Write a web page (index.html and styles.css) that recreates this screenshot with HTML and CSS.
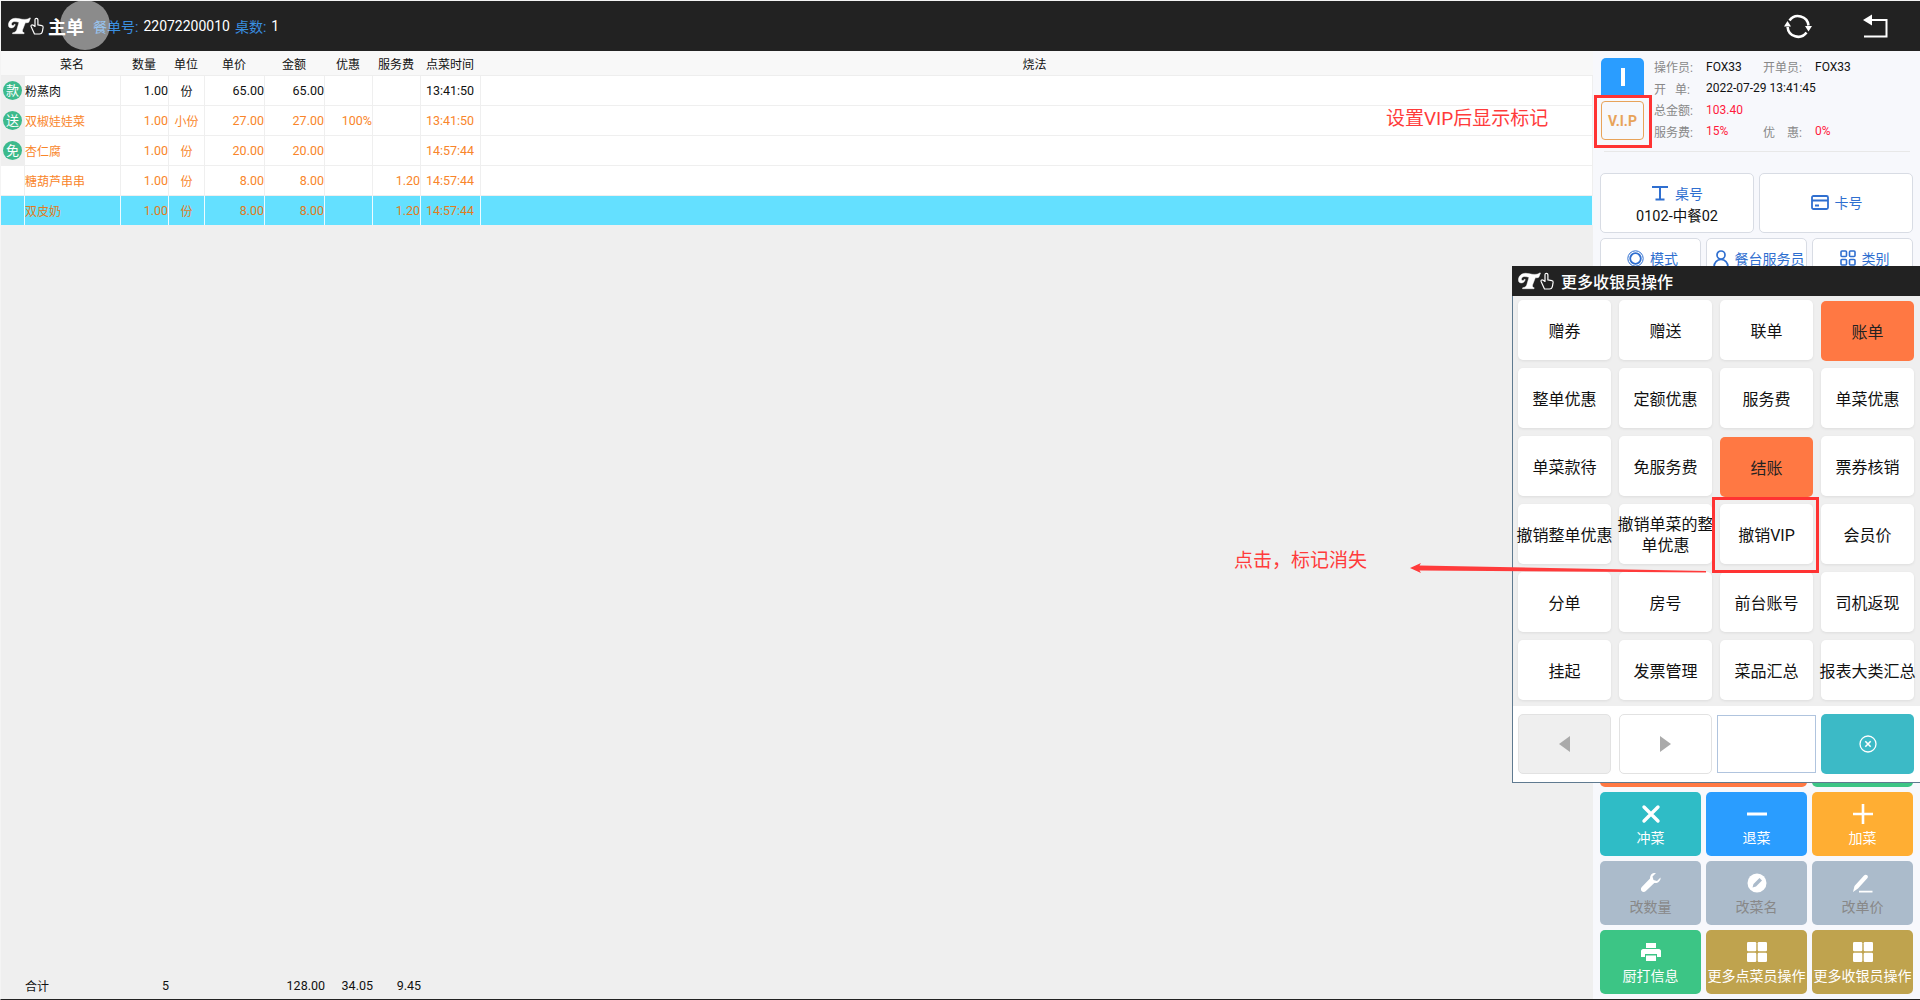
FILE: index.html
```html
<!DOCTYPE html>
<html lang="zh">
<head>
  <meta charset="utf-8">
  <title>主单</title>
  <link rel="stylesheet" href="styles.css">
</head>
<body>
  <svg class="defs" width="0" height="0">
    <symbol id="logo" viewBox="0 0 36 18">
      <path fill="#fff" stroke="#fff" stroke-width=".5" d="M.5 8.500C.1 4.500 3.300 1.300 7.500 1.300c3 0 6 1.300 9.500 1.100 2 0 3.700-.6 5-1.600l.5.3-1.700 4.100c-1 .5-2.200.7-3.500.6L14.500 13c-.4 1.500.2 2.300 1.700 2.800l-.2.9H4.500l.2-.9c2.200-.3 3.500-1.300 4.100-3L11 5.300c-1.500-.4-3-.8-4.300-.8-1.900 0-3.200 1-3.300 2.500-.1 1.100.8 1.800 1.900 1.400.6-.2 1-.6 1.100-1.100l.8.2c-.3 2-1.800 3.400-3.800 3.400C1.400 10.900.6 9.900.5 8.500z"/>
      <path fill="none" stroke="#fff" stroke-width="1.200" stroke-linejoin="round" d="M26.500 17h5c1.700 0 2.700-1.200 3-3l.6-3.600c.1-1-.3-1.700-1.200-1.800l-4-.7V3c0-2.300-2.900-2.300-2.900 0v6.500l-1.700-1.300c-1.600-1.100-3 .4-2 1.800l3.200 7z"/>
    </symbol>
    <symbol id="tiles" viewBox="0 0 20 20">
      <rect x="0" y="0" width="9.300" height="9.300" rx="1.200"/>
      <rect x="10.700" y="0" width="9.300" height="9.300" rx="1.200"/>
      <rect x="0" y="10.700" width="9.300" height="9.300" rx="1.200"/>
      <rect x="10.700" y="10.700" width="9.300" height="9.300" rx="1.200"/>
    </symbol>
  </svg>

  <div class="app">
    <header class="topbar">
      <div class="brand">
        <svg class="logo" width="36" height="18"><use href="#logo"/></svg>
        <span class="brand-name">主单</span>
        <span class="label-blue order-no">餐单号:</span>
        <span>22072200010</span>
        <span class="label-blue table-count">桌数:</span>
        <span>1</span>
      </div>
      <div class="top-actions">
        <svg width="28" height="28" viewBox="0 0 28 28" fill="none" stroke="#fff" stroke-width="2.600">
          <path d="M5.500 8.500A10.500 10.500 0 0 1 24.500 13.500"/>
          <path d="M22.500 20.500A10.500 10.500 0 0 1 3.600 15"/>
          <path fill="#fff" stroke="none" d="M0 14.500 3.500 9l3.500 5.500zM21 14l3.500 5.500L28 14z"/>
        </svg>
        <svg width="26" height="24" viewBox="0 0 26 24" fill="none" stroke="#fff" stroke-width="2">
          <path d="M8 6h16.500v16.500H2"/>
          <path fill="#fff" stroke="none" d="M1 6l9-5.500v11z"/>
        </svg>
      </div>
    </header>

    <div class="content">
      <main class="order">
        <div class="row head">
          <div></div>
          <div class="mid">菜名</div>
          <div class="mid">数量</div>
          <div class="mid">单位</div>
          <div class="mid">单价</div>
          <div class="mid">金额</div>
          <div class="mid">优惠</div>
          <div class="mid">服务费</div>
          <div class="mid">点菜时间</div>
          <div class="mid method">烧法</div>
        </div>
        <div class="row item">
          <div class="tag-cell"><span class="tag">款</span></div>
          <div>粉蒸肉</div><div class="num">1.00</div><div class="mid">份</div><div class="num">65.00</div><div class="num">65.00</div><div class="num"></div><div class="num"></div><div class="time">13:41:50</div><div></div>
        </div>
        <div class="row item warm">
          <div class="tag-cell"><span class="tag">送</span></div>
          <div>双椒娃娃菜</div><div class="num">1.00</div><div class="mid">小份</div><div class="num">27.00</div><div class="num">27.00</div><div class="num">100%</div><div class="num"></div><div class="time">13:41:50</div><div></div>
        </div>
        <div class="row item warm">
          <div class="tag-cell"><span class="tag">免</span></div>
          <div>杏仁腐</div><div class="num">1.00</div><div class="mid">份</div><div class="num">20.00</div><div class="num">20.00</div><div class="num"></div><div class="num"></div><div class="time">14:57:44</div><div></div>
        </div>
        <div class="row item warm">
          <div></div>
          <div>糖葫芦串串</div><div class="num">1.00</div><div class="mid">份</div><div class="num">8.00</div><div class="num">8.00</div><div class="num"></div><div class="num">1.20</div><div class="time">14:57:44</div><div></div>
        </div>
        <div class="row item warm selected">
          <div></div>
          <div>双皮奶</div><div class="num">1.00</div><div class="mid">份</div><div class="num">8.00</div><div class="num">8.00</div><div class="num"></div><div class="num">1.20</div><div class="time">14:57:44</div><div></div>
        </div>
        <div class="row totals">
          <div></div>
          <div>合计</div><div class="num">5</div><div></div><div></div><div class="num">128.00</div><div class="num">34.05</div><div class="num">9.45</div><div></div><div></div>
        </div>
      </main>

      <aside class="panel">
        <section class="info">
          <div class="badges">
            <div class="badge-i"><span></span></div>
            <div class="badge-vip">V.I.P</div>
          </div>
          <div class="info-grid">
            <span class="lbl">操作员:</span><span>FOX33</span><span class="lbl">开单员:</span><span>FOX33</span>
            <span class="lbl"><i class="gap-a">开</i>单:</span><span class="wide">2022-07-29 13:41:45</span>
            <span class="lbl">总金额:</span><span class="red wide">103.40</span>
            <span class="lbl">服务费:</span><span class="red">15%</span><span class="lbl"><i class="gap-b">优</i>惠:</span><span class="red">0%</span>
          </div>
        </section>

        <section class="fields">
          <button class="field">
            <span class="field-title">
              <svg width="18" height="16" viewBox="0 0 18 16" fill="none" stroke="currentColor" stroke-width="2"><path d="M1 2h16M9 2v12M4.500 14.500h9"/></svg>
              桌号
            </span>
            <span class="field-value">0102-中餐02</span>
          </button>
          <button class="field field-single">
            <span class="field-title">
              <svg width="18" height="15" viewBox="0 0 18 15" fill="none" stroke="currentColor" stroke-width="1.800"><rect x="1" y="1" width="16" height="13" rx="1.500"/><path d="M1 5.500h16M4 10.500h4"/></svg>
              卡号
            </span>
          </button>
        </section>
        <section class="modes">
          <button class="field mode">
            <svg width="17" height="17" viewBox="0 0 17 17" fill="none" stroke="currentColor"><circle cx="8.500" cy="8.500" r="7.700" stroke-width="1"/><circle cx="8.500" cy="8.500" r="5.300" stroke-width="1.800"/></svg>
            模式
          </button>
          <button class="field mode">
            <svg width="16" height="17" viewBox="0 0 16 17" fill="none" stroke="currentColor" stroke-width="1.700"><circle cx="8" cy="5" r="4"/><path d="M1 17c0-4.500 3-7.500 7-7.500s7 3 7 7.500"/></svg>
            餐台服务员
          </button>
          <button class="field mode">
            <svg width="16" height="16" viewBox="0 0 16 16" fill="none" stroke="currentColor" stroke-width="1.600"><rect x="1" y="1" width="5.500" height="5.500" rx="1"/><rect x="9.500" y="1" width="5.500" height="5.500" rx="1"/><rect x="1" y="9.500" width="5.500" height="5.500" rx="1"/><rect x="9.500" y="9.500" width="5.500" height="5.500" rx="1"/></svg>
            类别
          </button>
        </section>

        <section class="actions">
          <button class="act orange span2"></button>
          <button class="act green"></button>
          <button class="act teal">
            <svg width="20" height="20" viewBox="0 0 20 20" stroke="#fff" stroke-width="3.400" stroke-linecap="round"><path d="M3 3l14 14M17 3L3 17"/></svg>
            冲菜
          </button>
          <button class="act blue">
            <svg width="20" height="20" viewBox="0 0 20 20" stroke="#fff" stroke-width="2.800" stroke-linecap="round"><path d="M-1 10h21"/></svg>
            退菜
          </button>
          <button class="act amber">
            <svg width="20" height="20" viewBox="0 0 20 20" stroke="#fff" stroke-width="2.600" stroke-linecap="round"><path d="M0 10h20M10 0v20"/></svg>
            加菜
          </button>
          <button class="act gray">
            <svg width="20" height="20" viewBox="0 0 20 20" fill="#fff"><path d="M19.500 4.500 16 8l-3.500-1-1-3.500L15 0c-2.700-.6-6.200 1.200-6 5.500L.8 14c-1.200 1.300-1.200 2.800-.2 4s2.800 1.400 4 .2l8.700-8.200c4 .5 6.700-2.700 6.200-5.500z"/></svg>
            改数量
          </button>
          <button class="act gray">
            <svg width="20" height="20" viewBox="0 0 20 20"><circle cx="10" cy="10" r="9.500" fill="#fff"/><path d="M5.500 14.500 6.500 11 12.500 5 15 7.500 9 13.500z" fill="#abbbcb"/></svg>
            改菜名
          </button>
          <button class="act gray">
            <svg width="20" height="20" viewBox="0 0 20 20" fill="#fff"><path d="M0 19 1.500 13 11 2.500c1-1 2.300-1 3.200-.2s1 2 .1 3L5 15.500zM6 17.800h13.500v1.700H6z"/></svg>
            改单价
          </button>
          <button class="act green">
            <svg width="20" height="20" viewBox="0 0 20 20" fill="#fff"><path d="M5 1h10v5H5zM2 7h16c1 0 2 1 2 2v6h-4v-3H4v3H0V9c0-1 1-2 2-2zM5 13.500h10V19H5z"/></svg>
            厨打信息
          </button>
          <button class="act gold">
            <svg width="20" height="20" fill="#fff"><use href="#tiles"/></svg>
            更多点菜员操作
          </button>
          <button class="act gold">
            <svg width="20" height="20" fill="#fff"><use href="#tiles"/></svg>
            更多收银员操作
          </button>
        </section>
      </aside>
    </div>
  </div>

  <div class="popup">
    <div class="popup-head">
      <svg width="36" height="18"><use href="#logo"/></svg>
      <span>更多收银员操作</span>
    </div>
    <div class="popup-grid">
      <button class="op">赠券</button>
      <button class="op">赠送</button>
      <button class="op">联单</button>
      <button class="op hot">账单</button>
      <button class="op">整单优惠</button>
      <button class="op">定额优惠</button>
      <button class="op">服务费</button>
      <button class="op">单菜优惠</button>
      <button class="op">单菜款待</button>
      <button class="op">免服务费</button>
      <button class="op hot">结账</button>
      <button class="op">票券核销</button>
      <button class="op">撤销整单优惠</button>
      <button class="op">撤销单菜的整<br>单优惠</button>
      <button class="op">撤销VIP</button>
      <button class="op">会员价</button>
      <button class="op">分单</button>
      <button class="op">房号</button>
      <button class="op">前台账号</button>
      <button class="op">司机返现</button>
      <button class="op">挂起</button>
      <button class="op">发票管理</button>
      <button class="op">菜品汇总</button>
      <button class="op">报表大类汇总</button>
    </div>
    <div class="popup-foot">
      <button class="pager off"><span class="tri-left"></span></button>
      <button class="pager"><span class="tri-right"></span></button>
      <input class="page-input" type="text">
      <button class="close-btn">
        <svg width="18" height="18" viewBox="0 0 18 18" fill="none" stroke="#fff"><circle cx="9" cy="9" r="8" stroke-width="1.300"/><path d="M6.300 6.300l5.400 5.400M11.700 6.300l-5.400 5.400" stroke-width="1.600"/></svg>
      </button>
    </div>
  </div>

  <!-- overlays from the screenshot's markup -->
  <div class="touch-dot"></div>
  <div class="mark mark-vip"></div>
  <div class="mark mark-cancel"></div>
  <div class="note note-vip">设置VIP后显示标记</div>
  <div class="note note-click">点击&#xFF0C;标记消失</div>
  <svg class="arrow" width="300" height="14" viewBox="0 0 300 14">
    <path fill="#ff3b3b" d="M0 6 11 1 9.500 3.500 296 9V10.500L9.500 8.500 11 11z"/>
  </svg>
</body>
</html>
```

FILE: styles.css
```css
* {
  box-sizing: border-box;
}
body {
  margin: 0;
  width: 1920px;
  height: 1000px;
  overflow: hidden;
  position: relative;
  background-color: #efefef;
  font-family: Roboto, "Noto Sans CJK SC", sans-serif;
  font-size: 12px;
  color: #111;
}
button {
  font-family: inherit;
  padding: 0;
  cursor: pointer;
}
.defs {
  position: absolute;
}

.app {
  height: 1000px;
  display: flex;
  flex-direction: column;
  border-top: 1px solid #f4f4f4;
  border-left: 1px solid #f4f4f4;
  border-bottom: 1px solid #222;
}

/* top bar */
.topbar {
  height: 50px;
  flex: none;
  background-color: #222;
  color: #fff;
  display: flex;
  justify-content: space-between;
  align-items: center;
  padding: 0 32px 0 7px;
}
.brand {
  display: flex;
  align-items: center;
  font-size: 14px;
}
.logo {
  margin-right: 4px;
}
.brand-name {
  font-size: 18px;
  font-weight: 700;
}
.label-blue {
  color: #3a8fe0;
}
.order-no {
  margin: 0 5px 0 9px;
}
.table-count {
  margin: 0 5px 0 5px;
}
.top-actions {
  display: flex;
  align-items: center;
  gap: 50px;
}

/* order table */
.content {
  flex: 1;
  display: flex;
  min-height: 0;
}
.order {
  width: 1592px;
  display: flex;
  flex-direction: column;
}
.row {
  display: grid;
  grid-template-columns: 24px 96px 48px 36px 60px 60px 48px 48px 60px 1fr;
  align-items: stretch;
}
.row > div {
  display: flex;
  align-items: center;
  white-space: nowrap;
}
.mid {
  justify-content: center;
}
.num {
  justify-content: flex-end;
  font-size: 12.5px;
}
.time {
  justify-content: center;
  font-size: 12.5px;
  padding-right: 1px;
}
.head {
  height: 25px;
  background-color: #f8f8f8;
  border-bottom: 1px solid #eee;
}
.head .mid {
  padding-right: 2px;
}
.head .method {
  padding-right: 5px;
}
.item {
  height: 30px;
  background-color: #fff;
  border-bottom: 1px solid #efefef;
}
.item > div {
  border-right: 1px solid #efefef;
}
.warm {
  color: #f9852a;
}
.selected {
  height: 29px;
  background-color: #64e0ff;
  color: #e07c22;
  border-bottom: none;
}
.selected > div {
  border-right-color: #eefbff;
}
.tag-cell {
  background-color: #efefef;
  justify-content: center;
}
.tag {
  width: 19px;
  height: 19px;
  border-radius: 50%;
  background-color: #3dba8c;
  color: #fff;
  font-size: 13px;
  line-height: 19px;
  text-align: center;
}
.totals {
  margin-top: auto;
  height: 26px;
  padding-bottom: 2px;
}

/* right panel */
.panel {
  width: 327px;
  background-color: #f7f8fc;
  padding: 7px 7px 5px;
  display: flex;
  flex-direction: column;
}
.info {
  display: flex;
  height: 94px;
  margin-left: 1px;
  position: relative;
}
.info::after {
  content: "";
  position: absolute;
  left: 3px;
  right: 3px;
  bottom: 0;
  height: 1px;
  background-color: #e8e8e8;
}
.badges {
  width: 43px;
  display: flex;
  flex-direction: column;
  gap: 5px;
}
.badge-i {
  height: 38px;
  background-color: #2a9dff;
  border-radius: 5px 5px 0 0;
  display: flex;
  align-items: center;
  justify-content: center;
}
.badge-i span {
  width: 4px;
  height: 18px;
  background-color: #fff;
}
.badge-vip {
  height: 39px;
  border: 1px solid #e8a35a;
  border-radius: 4px;
  color: #e8a35a;
  font-size: 14px;
  font-weight: 700;
  display: flex;
  align-items: center;
  justify-content: center;
}
.info-grid {
  margin: -2px 0 0 10px;
  display: grid;
  grid-template-columns: 52px 57px 52px 1fr;
  grid-auto-rows: 21.5px;
  align-items: center;
  align-content: start;
}
.lbl {
  color: #888;
  white-space: nowrap;
}
.lbl i {
  font-style: normal;
}
.gap-a {
  letter-spacing: 9px;
}
.gap-b {
  letter-spacing: 12px;
}
.wide {
  grid-column: span 3;
}
.red {
  color: #ff1a3c;
}
.fields {
  margin-top: 21px;
  display: grid;
  grid-template-columns: 154px 154px;
  gap: 5px;
}
.modes {
  margin-top: 5px;
  display: grid;
  grid-template-columns: repeat(3, 101px);
  gap: 5px;
}
.field {
  background-color: #fff;
  border: 1px solid #d8dce4;
  border-radius: 5px;
  height: 60px;
  display: flex;
  flex-direction: column;
  align-items: center;
  justify-content: center;
  color: #2f6fd0;
  font-size: 14px;
  gap: 1px;
  padding-top: 1px;
}
.field-single {
  padding: 0 0 2px 1px;
}
.field-title {
  display: flex;
  align-items: center;
  gap: 6px;
}
.field-value {
  color: #111;
  font-size: 14.5px;
}
.mode {
  flex-direction: row;
  align-items: flex-start;
  gap: 6px;
  padding: 9px 0 0 4px;
}
.mode svg {
  margin-top: 2px;
}
.actions {
  margin-top: auto;
  display: grid;
  grid-template-columns: repeat(3, 101px);
  grid-auto-rows: 64px;
  gap: 5px;
}
.act {
  border: none;
  border-radius: 5px;
  color: #fff;
  font-size: 14px;
  white-space: nowrap;
  display: flex;
  flex-direction: column;
  align-items: center;
  justify-content: center;
  gap: 3px;
  padding-top: 3px;
}
.span2 {
  grid-column: span 2;
}
.orange { background-color: #ff7843; }
.green { background-color: #3cc585; }
.teal { background-color: #2fbcc6; }
.blue { background-color: #2a9dff; }
.amber { background-color: #ffae33; }
.gray { background-color: #abbbcb; color: #888; }
.gold { background-color: #bfa34e; }

/* more operations popup */
.popup {
  position: absolute;
  left: 1512px;
  top: 266px;
  width: 408px;
  height: 517px;
  background-color: #fff;
  border: 1px solid #5f7a90;
  border-top: none;
  border-right: none;
}
.popup-head {
  height: 30px;
  margin-left: -1px;
  background-color: #222;
  color: #fff;
  font-size: 16px;
  font-weight: 500;
  display: flex;
  align-items: center;
  gap: 7px;
  padding-left: 6px;
}
.popup-grid {
  background-color: #efefef;
  height: 410px;
  padding: 4px 0 0 5px;
  display: grid;
  grid-template-columns: repeat(4, 93px);
  grid-auto-rows: 60px;
  gap: 8px;
}
.op {
  border: none;
  border-radius: 5px;
  background-color: #fff;
  box-shadow: 0 1px 3px rgba(0,0,0,0.08);
  color: #111;
  font-size: 16px;
  line-height: 21px;
  white-space: nowrap;
  display: flex;
  align-items: center;
  justify-content: center;
  text-align: center;
  padding-top: 2px;
}
.hot {
  background-color: #ff7843;
  box-shadow: none;
  color: #222;
  height: 60px;
  margin-top: 1px;
}
.popup-foot {
  display: flex;
  padding: 8px 0 0 5px;
}
.pager {
  width: 93px;
  height: 60px;
  background-color: #fff;
  border: 1px solid #e2e2e2;
  border-radius: 5px;
  margin-right: 8px;
  display: flex;
  align-items: center;
  justify-content: center;
}
.pager + .pager {
  margin-right: 5px;
}
.off {
  background-color: #efefef;
}
.tri-left {
  border: 8px solid transparent;
  border-left: none;
  border-right: 11px solid #aaa;
}
.tri-right {
  border: 8px solid transparent;
  border-right: none;
  border-left: 11px solid #aaa;
}
.page-input {
  width: 99px;
  height: 58px;
  margin-top: 1px;
  margin-right: 5px;
  background-color: #fff;
  border: 1px solid #b0c4de;
  outline: none;
}
.close-btn {
  width: 93px;
  height: 60px;
  border: none;
  border-radius: 5px;
  background-color: #3cbac6;
  display: flex;
  align-items: center;
  justify-content: center;
}

/* annotations on top */
.touch-dot {
  position: absolute;
  left: 60px;
  top: 0;
  width: 50px;
  height: 50px;
  border-radius: 50%;
  background-color: rgba(255,255,255,0.48);
}
.mark {
  position: absolute;
  border: 3px solid #ff3333;
}
.mark-vip {
  left: 1594px;
  top: 95px;
  width: 58px;
  height: 53px;
}
.mark-cancel {
  left: 1712px;
  top: 497px;
  width: 107px;
  height: 76px;
}
.note {
  position: absolute;
  color: #ff3b3b;
  font-size: 19px;
  line-height: 24px;
  white-space: nowrap;
}
.note-vip {
  left: 1386px;
  top: 107px;
}
.note-click {
  left: 1234px;
  top: 549px;
}
.arrow {
  position: absolute;
  left: 1410px;
  top: 562px;
}
```
